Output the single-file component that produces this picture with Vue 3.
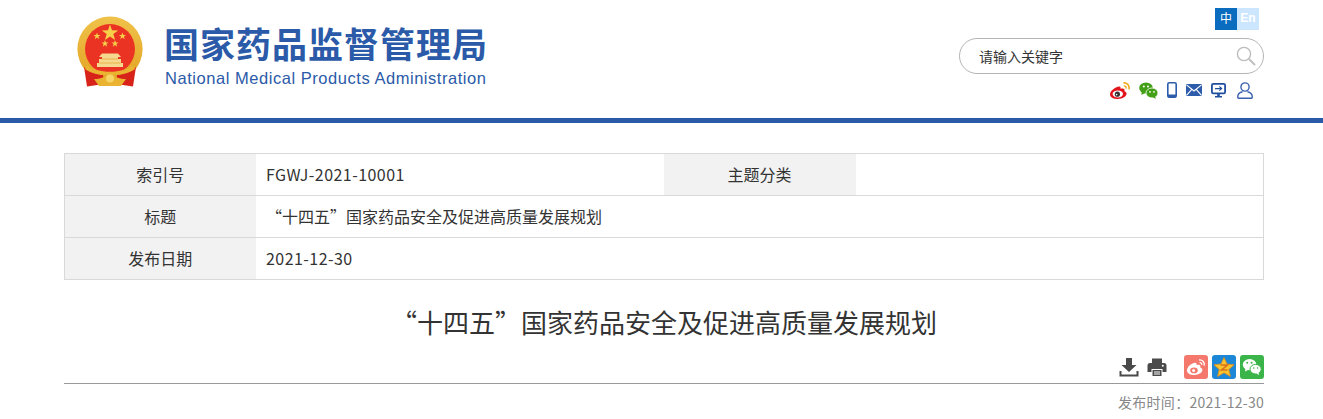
<script setup>
const rows = [
  { label: '索引号', value: 'FGWJ-2021-10001', label2: '主题分类', value2: '', latin: true },
  { label: '标题', value: '“十四五”国家药品安全及促进高质量发展规划', wide: true },
  { label: '发布日期', value: '2021-12-30', wide: true, latin: true },
]
</script>

<template>
  <div class="page">
    <header class="header">
      <div class="brand">
        <svg class="emblem" viewBox="0 0 66 71" width="66" height="71">
          <defs>
            <linearGradient id="gold" x1="0" y1="0" x2="0" y2="1">
              <stop offset="0" stop-color="#f0c24a" />
              <stop offset="1" stop-color="#e2a323" />
            </linearGradient>
          </defs>
          <circle cx="33" cy="33" r="32.6" fill="url(#gold)" />
          <circle cx="33" cy="33" r="25" fill="#ea3323" />
          <polygon points="33,8.5 35,14.3 41.2,14.4 36.3,18.1 38.1,24 33,20.5 27.9,24 29.7,18.1 24.8,14.4 31,14.3" fill="#f7d04a" />
          <polygon points="20,16.5 20.9,19 23.6,19 21.4,20.6 22.2,23.2 20,21.6 17.8,23.2 18.6,20.6 16.4,19 19.1,19" fill="#f7d04a" />
          <polygon points="45.5,16.5 46.4,19 49.1,19 46.9,20.6 47.7,23.2 45.5,21.6 43.3,23.2 44.1,20.6 41.9,19 44.6,19" fill="#f7d04a" />
          <polygon points="28,24 28.9,26.5 31.6,26.5 29.4,28.1 30.2,30.7 28,29.1 25.8,30.7 26.6,28.1 24.4,26.5 27.1,26.5" fill="#f7d04a" />
          <polygon points="38,24 38.9,26.5 41.6,26.5 39.4,28.1 40.2,30.7 38,29.1 35.8,30.7 36.6,28.1 34.4,26.5 37.1,26.5" fill="#f7d04a" />
          <path d="M25 37.5 H41 L44 41 H41 V43 H44 V47 H46 V51 H20 V47 H22 V43 H25 V41 H22 Z" fill="#f4d98e" />
          <path d="M25 43 H41 M22 47 H44" stroke="#e7a93a" stroke-width=".8" />
          <path d="M7 51 C13 57 21 59 26 59 L27 68 L10 70.5 C9 64 8 57 7 51 Z" fill="#d8231a" />
          <path d="M59 51 C53 57 45 59 40 59 L39 68 L56 70.5 C57 64 58 57 59 51 Z" fill="#d8231a" />
          <path d="M10 49 C20 58 46 58 56 49 L58 53 C47 61 19 61 8 53 Z" fill="#eab332" />
          <path d="M17 63 C23 63 28 62 33 56 C38 62 43 63 49 63 L44 70 H22 Z" fill="#eab332" />
          <circle cx="33" cy="62.5" r="4" fill="#f6d468" />
        </svg>
        <div class="brand-text">
          <div class="brand-cn">国家药品监督管理局</div>
          <div class="brand-en">National Medical Products Administration</div>
        </div>
      </div>

      <div class="tools">
        <div class="lang">
          <span class="lang-cn">中</span>
          <span class="lang-en">En</span>
        </div>
        <div class="search">
          <span class="search-text">请输入关键字</span>
          <svg viewBox="0 0 20 20" width="20" height="20" class="search-icon">
            <circle cx="8" cy="8" r="6.6" fill="none" stroke="#bdbdbd" stroke-width="1.4" />
            <path d="M13 13 L19 19" stroke="#bdbdbd" stroke-width="1.8" />
          </svg>
        </div>
        <div class="links">
          <svg viewBox="0 0 20 17" width="20" height="17">
            <path d="M8 4.8 C3.6 6 0 9.4 0 12.4 C0 15.4 4 17 8 17 C12.6 17 16.6 14.4 16.6 11.6 C16.6 10.2 15.2 9.4 14.4 9.2 C15.2 7.2 13.8 5.8 10.6 6.8 C10.8 4.8 10 4.2 8 4.8 Z" fill="#e2141c" />
            <ellipse cx="7.8" cy="12" rx="5.2" ry="3.4" fill="#fff" />
            <circle cx="7.4" cy="12.2" r="2.6" fill="#333" />
            <circle cx="6.6" cy="12.6" r=".8" fill="#fff" />
            <path d="M13.4 .9 C17 .6 19.8 3.4 19 7.4" fill="none" stroke="#f2a81d" stroke-width="1.6" />
            <path d="M13.8 3.9 C15.4 3.8 16.4 4.8 16.2 6.6" fill="none" stroke="#f2a81d" stroke-width="1.4" />
          </svg>
          <svg viewBox="0 0 19 17" width="19" height="17">
            <ellipse cx="7" cy="6" rx="6.8" ry="5.6" fill="#43a016" />
            <path d="M2.8 9.4 L2.4 13 L6 11 Z" fill="#43a016" />
            <ellipse cx="13" cy="11" rx="6" ry="5" fill="#43a016" stroke="#fff" stroke-width=".8" />
            <path d="M16 14.4 L17 16.8 L13.8 15.6 Z" fill="#43a016" />
            <circle cx="4.8" cy="4.4" r="1" fill="#fff" />
            <circle cx="9" cy="4.4" r="1" fill="#fff" />
            <circle cx="11" cy="9.8" r=".9" fill="#fff" />
            <circle cx="15" cy="9.8" r=".9" fill="#fff" />
          </svg>
          <svg viewBox="0 0 10 16" width="10" height="16">
            <rect x=".8" y=".8" width="8.4" height="14.4" rx="1.4" fill="none" stroke="#2d5cab" stroke-width="1.6" />
            <path d="M.8 12.6 H9.2 V14.6 Q9.2 15.2 8.6 15.2 H1.4 Q.8 15.2 .8 14.6 Z" fill="#2d5cab" />
          </svg>
          <svg viewBox="0 0 16 12" width="16" height="12">
            <rect width="16" height="12" rx="1" fill="#2d5cab" />
            <path d="M.5 .8 L8 7 L15.5 .8 M.5 11.4 L5.8 5.4 M15.5 11.4 L10.2 5.4" fill="none" stroke="#fff" stroke-width="1.1" />
          </svg>
          <svg viewBox="0 0 15 15" width="15" height="15">
            <rect x=".9" y=".9" width="13.2" height="9.4" rx="1.4" fill="none" stroke="#1f4f9e" stroke-width="1.8" />
            <path d="M4 5.6 H10.5 M8.4 3.5 L10.7 5.6 L8.4 7.7" fill="none" stroke="#1f4f9e" stroke-width="1.1" />
            <path d="M6.2 11 H8.8 V13 H11 V14.6 H4 V13 H6.2 Z" fill="#1f4f9e" />
          </svg>
          <svg class="user" viewBox="0 0 16 17" width="16" height="17">
            <circle cx="8" cy="5" r="4.1" fill="none" stroke="#3a62ae" stroke-width="1.4" />
            <path d="M.8 16.2 V14.6 C.8 11.6 3.6 10.2 5.6 9.8 M15.2 16.2 V14.6 C15.2 11.6 12.4 10.2 10.4 9.8 M.8 16.2 H15.2" fill="none" stroke="#3a62ae" stroke-width="1.4" />
          </svg>
        </div>
      </div>
    </header>

    <main class="content">
      <table class="info">
        <tbody>
          <tr v-for="row in rows" :key="row.label">
            <th>{{ row.label }}</th>
            <td :colspan="row.wide ? 3 : 1" :class="{ narrow: !row.wide, latin: row.latin }">{{ row.value }}</td>
            <template v-if="!row.wide">
              <th>{{ row.label2 }}</th>
              <td>{{ row.value2 }}</td>
            </template>
          </tr>
        </tbody>
      </table>

      <h1 class="title">“十四五”国家药品安全及促进高质量发展规划</h1>

      <div class="actions">
        <svg class="download" viewBox="0 0 20 20" width="20" height="20">
          <path d="M7 1 H13 V8 H17.5 L10 15 L2.5 8 H7 Z" fill="#4a4a4a" />
          <path d="M1.5 14 V18.5 H18.5 V14" fill="none" stroke="#4a4a4a" stroke-width="2" />
        </svg>
        <svg class="print" viewBox="0 0 20 20" width="20" height="20">
          <path d="M5 1.5 H15 V6 H5 Z M3 6 H17 Q19.5 6 19.5 8.5 V15 H15.5 V12 H4.5 V15 H.5 V8.5 Q.5 6 3 6 Z" fill="#4a4a4a" />
          <path d="M5.5 13 H14.5 V19 H5.5 Z" fill="#4a4a4a" />
          <path d="M7 15 H13 M7 17 H13" stroke="#fff" stroke-width="1" />
          <circle cx="15.8" cy="8.8" r="1" fill="#fff" />
        </svg>
        <div class="shares">
          <span class="share weibo">
            <svg viewBox="0 0 20 18" width="20" height="18">
              <path d="M8 5 C4 6.2 1 9.5 1 12.4 C1 15.4 4.6 17 8.4 17 C12.6 17 16.4 14.6 16.4 11.8 C16.4 10.4 15 9.8 14.2 9.6 C15 7.6 13.8 6.2 10.6 7 C10.8 5.2 10 4.4 8 5 Z" fill="#fff" />
              <ellipse cx="8" cy="12.4" rx="3.8" ry="2.8" fill="#f5786c" />
              <circle cx="7.6" cy="12.4" r="1.5" fill="#fff" />
              <path d="M13 2 C16.4 1.6 18.8 4 18.2 7.6 M13.6 4.6 C15 4.4 16 5.4 15.8 6.8" fill="none" stroke="#fff" stroke-width="1.3" />
            </svg>
          </span>
          <span class="share qzone">
            <svg viewBox="0 0 22 22" width="22" height="22">
              <polygon points="11,1.5 14,8 21,8.8 15.8,13.4 17.4,20.4 11,16.8 4.6,20.4 6.2,13.4 1,8.8 8,8" fill="#f8c52e" stroke="#e28a1a" stroke-width=".8" />
              <path d="M7.5 9 H14.5 L8.5 14 H14.5" fill="none" stroke="#d9701a" stroke-width="1.6" />
            </svg>
          </span>
          <span class="share wechat">
            <svg viewBox="0 0 20 18" width="20" height="18">
              <ellipse cx="7.6" cy="6.6" rx="6.8" ry="5.6" fill="#fff" />
              <path d="M3.5 10 L3 13.6 L7 11.4 Z" fill="#fff" />
              <ellipse cx="13.6" cy="11.2" rx="5.6" ry="4.8" fill="#fff" stroke="#3bb54a" stroke-width="1" />
              <path d="M16.4 14.6 L17.2 17 L14.2 15.6 Z" fill="#fff" />
              <circle cx="5.2" cy="4.8" r="1" fill="#3bb54a" />
              <circle cx="9.6" cy="4.8" r="1" fill="#3bb54a" />
              <circle cx="11.8" cy="10" r=".8" fill="#3bb54a" />
              <circle cx="15.6" cy="10" r=".8" fill="#3bb54a" />
            </svg>
          </span>
        </div>
      </div>

      <div class="meta">发布时间：2021-12-30</div>
    </main>
  </div>
</template>

<style>
html,
body {
  overflow: hidden;
  background: #fff;
}
</style>

<style scoped>
.page {
  font-family: "Noto Sans CJK SC", "Noto Sans", sans-serif;
  color: #333;
  height: 419px;
  overflow: hidden;
}

.header {
  height: 118px;
  border-bottom: 5px solid #2b5aa8;
  display: flex;
  justify-content: space-between;
  padding: 0 59px 0 77px;
}

.brand {
  display: flex;
  align-items: flex-start;
  padding-top: 16px;
}

.emblem {
  display: block;
}

.brand-text {
  margin-left: 22px;
  margin-top: 5px;
  color: #2b5aa8;
}

.brand-cn {
  font-size: 35px;
  font-weight: 700;
  line-height: 44px;
  letter-spacing: 1px;
  margin-left: -1px;
  white-space: nowrap;
}

.brand-en {
  font-family: "Liberation Sans", sans-serif;
  font-size: 16.5px;
  line-height: 20px;
  margin-top: 3px;
  letter-spacing: 0.54px;
  white-space: nowrap;
}

.tools {
  display: flex;
  flex-direction: column;
  align-items: flex-end;
  width: 305px;
  padding-top: 8px;
}

.lang {
  display: flex;
  margin-right: 5px;
  font-size: 12px;
}

.lang span {
  width: 22px;
  height: 22px;
  line-height: 20px;
  text-align: center;
  color: #fff;
}

.lang-cn {
  background: #0a6cbf;
}

.lang-en {
  background: #cce6ff;
  font-weight: 700;
  font-family: "Liberation Sans", sans-serif;
}

.search {
  margin-top: 8px;
  width: 305px;
  height: 36px;
  box-sizing: border-box;
  border: 1px solid #b5b5b5;
  border-radius: 18px;
  display: flex;
  align-items: center;
  justify-content: space-between;
  padding: 0 7px 0 19px;
  font-size: 14px;
}

.search-text {
  color: #333;
}

.links {
  margin-top: 6px;
  display: flex;
  align-items: center;
  gap: 9px;
  padding-right: 11px;
  height: 20px;
}

.user {
  margin-left: 2px;
}

.content {
  width: 1200px;
  margin: 30px 0 0 64px;
}

.info {
  width: 1200px;
  border-collapse: collapse;
  table-layout: fixed;
  font-size: 16px;
}

.info th,
.info td {
  height: 42px;
  padding: 0 0 2px;
  border-top: 1px solid #d9d9d9;
  border-bottom: 1px solid #d9d9d9;
  box-sizing: border-box;
}

.info th {
  width: 191px;
  background: #f2f2f2;
  font-weight: 400;
  text-align: center;
}

.info th:nth-child(3) {
  width: 192px;
}

.info tr > :first-child {
  border-left: 1px solid #d9d9d9;
}

.info tr > :last-child {
  border-right: 1px solid #d9d9d9;
}

.info td {
  padding-left: 10.5px;
}

.info td.narrow {
  width: 408px;
}

.info td.latin {
  letter-spacing: 0.45px;
}

.title {
  margin: 25px 0 0;
  text-align: center;
  font-size: 26px;
  font-weight: 400;
  line-height: 34px;
  color: #333;
}

.actions {
  margin-top: 14px;
  height: 28px;
  padding-top: 2px;
  border-bottom: 1px solid #999;
  display: flex;
  justify-content: flex-end;
  align-items: flex-start;
  gap: 8px;
}

.download,
.print {
  margin-top: 2px;
}

.shares {
  display: flex;
  gap: 4px;
  margin-left: 9px;
}

.share {
  width: 24px;
  height: 24px;
  border-radius: 3px;
  display: flex;
  align-items: center;
  justify-content: center;
}

.weibo {
  background: #f5786c;
}

.qzone {
  background: #1b87d6;
}

.wechat {
  background: #3bb54a;
}

.meta {
  margin-top: 8px;
  text-align: right;
  font-size: 14px;
  line-height: 20px;
  letter-spacing: 0.27px;
  color: #888;
}
</style>
